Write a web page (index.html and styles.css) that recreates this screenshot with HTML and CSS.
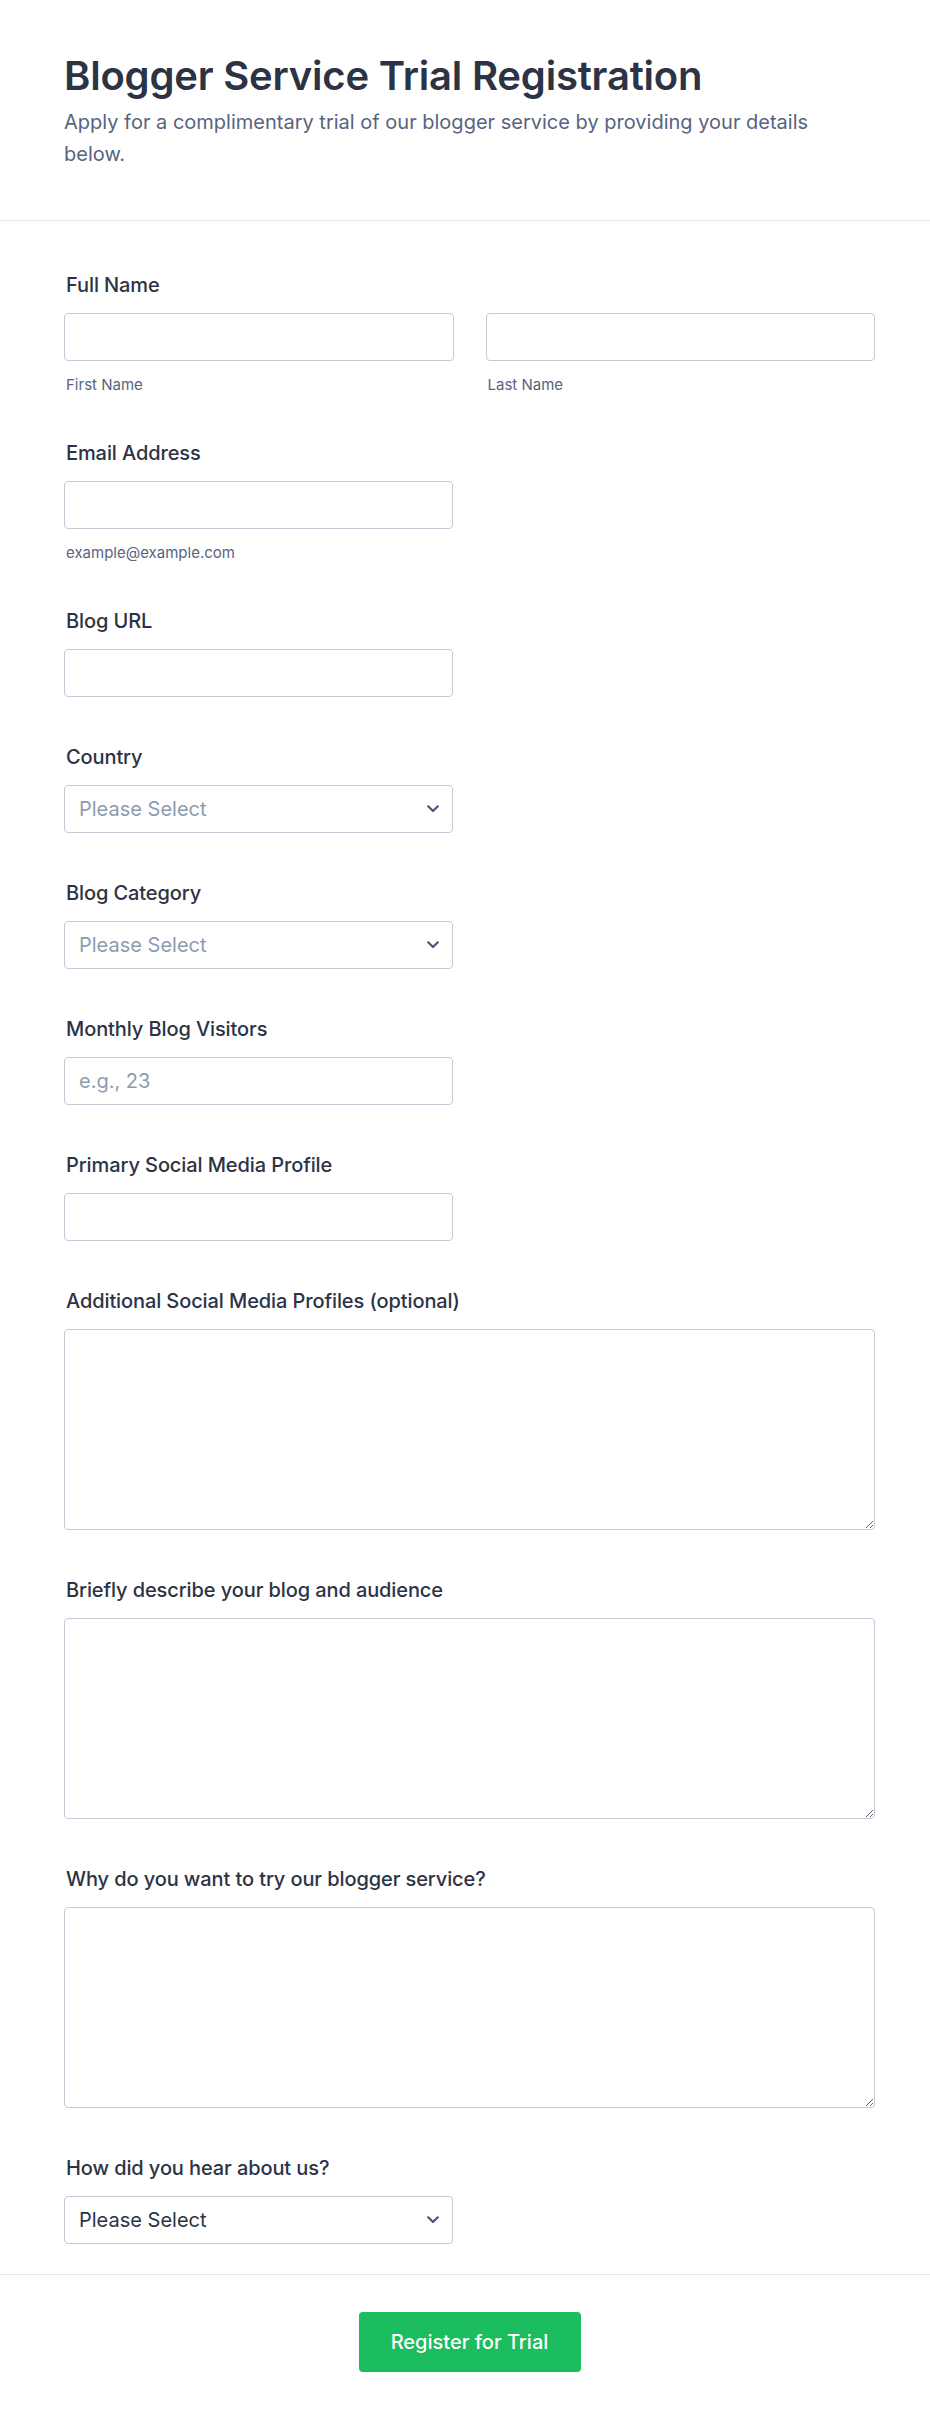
FILE: index.html
```html
<!DOCTYPE html>
<html lang="en">
<head>
<meta charset="utf-8">
<title>Blogger Service Trial Registration</title>
<link rel="stylesheet" href="styles.css">
</head>
<body>
<div class="page">
  <header class="form-header">
    <h1 class="title">Blogger Service Trial Registration</h1>
    <p class="subtitle">Apply for a complimentary trial of our blogger service by providing your details below.</p>
  </header>

  <form class="form-body">
    <div class="field">
      <label class="label">Full Name</label>
      <div class="two-col">
        <div class="col">
          <input class="input" type="text">
          <div class="sub">First Name</div>
        </div>
        <div class="col">
          <input class="input" type="text">
          <div class="sub">Last Name</div>
        </div>
      </div>
    </div>

    <div class="field">
      <label class="label">Email Address</label>
      <div class="half">
        <input class="input" type="email">
        <div class="sub">example@example.com</div>
      </div>
    </div>

    <div class="field">
      <label class="label">Blog URL</label>
      <div class="half"><input class="input" type="text"></div>
    </div>

    <div class="field">
      <label class="label">Country</label>
      <div class="half select-wrap">
        <select class="input select placeholder"><option>Please Select</option></select>
        <svg class="chevron" width="12" height="8" viewBox="0 0 12 8"><polyline points="1.2,1.3 6,6 10.8,1.3" fill="none" stroke="currentColor" stroke-width="2.2" stroke-linecap="round" stroke-linejoin="round"/></svg>
      </div>
    </div>

    <div class="field">
      <label class="label">Blog Category</label>
      <div class="half select-wrap">
        <select class="input select placeholder"><option>Please Select</option></select>
        <svg class="chevron" width="12" height="8" viewBox="0 0 12 8"><polyline points="1.2,1.3 6,6 10.8,1.3" fill="none" stroke="currentColor" stroke-width="2.2" stroke-linecap="round" stroke-linejoin="round"/></svg>
      </div>
    </div>

    <div class="field">
      <label class="label">Monthly Blog Visitors</label>
      <div class="half"><input class="input" type="text" placeholder="e.g., 23"></div>
    </div>

    <div class="field">
      <label class="label">Primary Social Media Profile</label>
      <div class="half"><input class="input" type="text"></div>
    </div>

    <div class="field">
      <label class="label">Additional Social Media Profiles (optional)</label>
      <textarea class="textarea"></textarea>
    </div>

    <div class="field">
      <label class="label">Briefly describe your blog and audience</label>
      <textarea class="textarea"></textarea>
    </div>

    <div class="field">
      <label class="label">Why do you want to try our blogger service?</label>
      <textarea class="textarea"></textarea>
    </div>

    <div class="field last">
      <label class="label">How did you hear about us?</label>
      <div class="half select-wrap">
        <select class="input select"><option>Please Select</option></select>
        <svg class="chevron" width="12" height="8" viewBox="0 0 12 8"><polyline points="1.2,1.3 6,6 10.8,1.3" fill="none" stroke="currentColor" stroke-width="2.2" stroke-linecap="round" stroke-linejoin="round"/></svg>
      </div>
    </div>
  </form>

  <footer class="form-footer">
    <button class="submit" type="button">Register for Trial</button>
  </footer>
</div>
</body>
</html>
```

FILE: styles.css
```css
* {
  box-sizing: border-box;
}

html, body {
  margin: 0;
  padding: 0;
  background: #ffffff;
}

body {
  font-family: "Inter", "Noto Sans", sans-serif;
  color: #2c3345;
}

.page {
  width: 930px;
}

.form-header {
  padding: 52px 55px 50px 64px;
  border-bottom: 1px solid #e4e6ee;
}

.title {
  margin: 0;
  font-size: 40px;
  line-height: 48px;
  font-weight: 600;
  color: #2c3345;
  letter-spacing: -0.2px;
}

.subtitle {
  margin: 6px 0 0;
  max-width: 770px;
  font-size: 20px;
  line-height: 32px;
  font-weight: 400;
  color: #57647e;
}

.form-body {
  padding: 52px 55px 30px 64px;
  display: flex;
  flex-direction: column;
  gap: 48px;
}

.field {
  display: flex;
  flex-direction: column;
}

.label {
  display: block;
  padding-left: 2px;
  font-size: 20px;
  line-height: 24px;
  font-weight: 500;
  letter-spacing: -0.1px;
  color: #2c3345;
  margin-bottom: 16px;
}

.two-col {
  display: grid;
  grid-template-columns: 1fr 1fr;
  column-gap: 32px;
}

.half {
  width: 389px;
}

.col {
  display: flex;
  flex-direction: column;
}

.input {
  display: block;
  width: 100%;
  height: 48px;
  margin: 0;
  padding: 0 14px;
  border: 1px solid #c3cad8;
  border-radius: 4px;
  background: #ffffff;
  font-family: "Inter", "Noto Sans", sans-serif;
  font-size: 20px;
  color: #2c3345;
  outline: none;
}

.input::placeholder {
  color: #8d9bb1;
}

.sub {
  margin-top: 14px;
  margin-bottom: -2px;
  padding-left: 2px;
  font-size: 15px;
  line-height: 20px;
  color: #57647e;
}

.select-wrap {
  position: relative;
}

.select {
  appearance: none;
  -webkit-appearance: none;
  padding-right: 40px;
}

.select.placeholder {
  color: #8d9bb1;
}

.chevron {
  position: absolute;
  right: 14px;
  top: 20px;
  color: #4b5675;
  pointer-events: none;
}

.textarea {
  display: block;
  width: 100%;
  height: 201px;
  margin: 0;
  padding: 10px 14px;
  border: 1px solid #c3cad8;
  border-radius: 4px;
  background: #ffffff;
  font-family: "Inter", "Noto Sans", sans-serif;
  font-size: 20px;
  color: #2c3345;
  resize: vertical;
  outline: none;
}

.form-footer {
  border-top: 1px solid #e4e6ee;
  padding: 37px 55px 50px 64px;
  display: flex;
  justify-content: center;
}

.submit {
  height: 60px;
  width: 222px;
  border: none;
  border-radius: 4px;
  background: #1bbd5e;
  color: #ffffff;
  font-family: "Inter", "Noto Sans", sans-serif;
  font-size: 20px;
  font-weight: 500;
  cursor: pointer;
}
```
